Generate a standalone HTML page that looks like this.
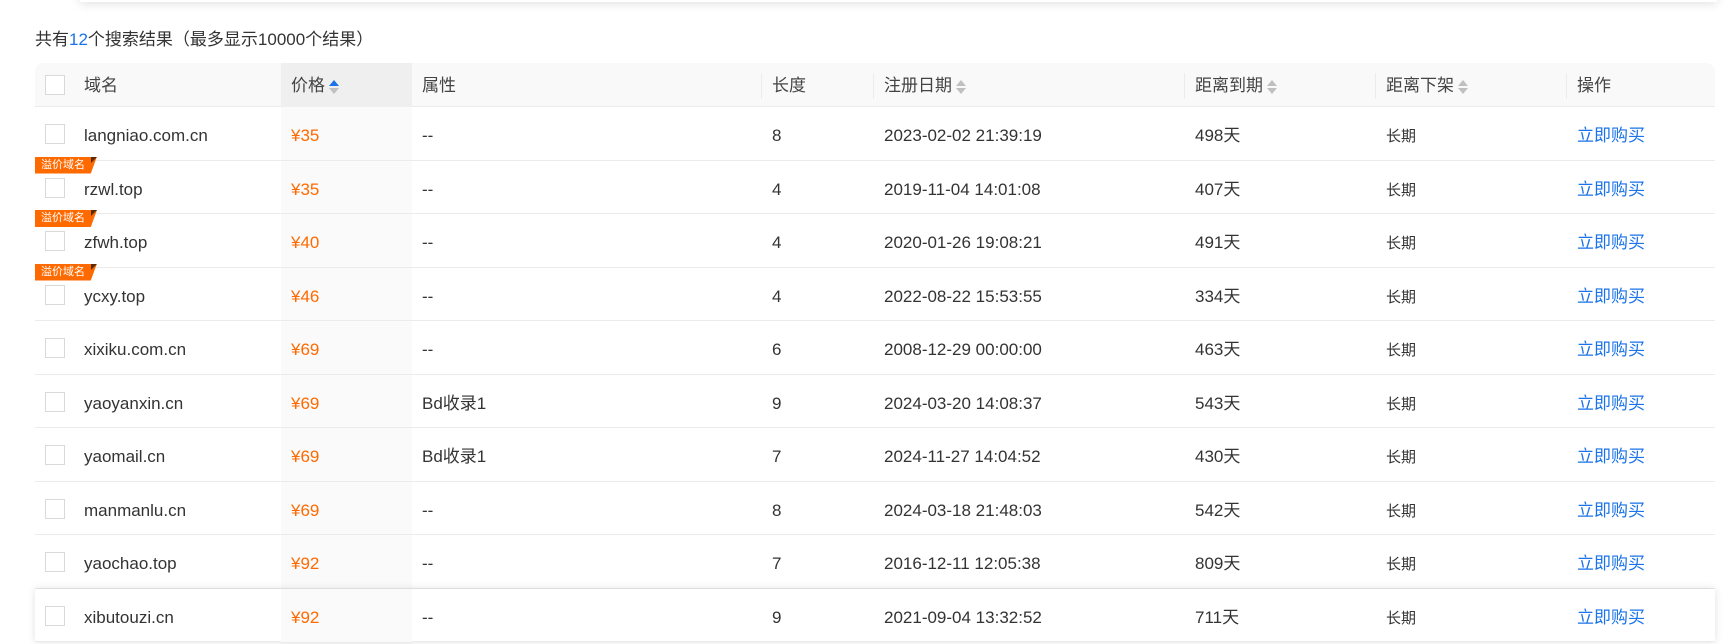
<!DOCTYPE html>
<html><head><meta charset="utf-8"><style>
*{margin:0;padding:0;box-sizing:border-box}
body{width:1735px;height:644px;overflow:hidden;background:#fff;font-family:"Liberation Sans","Noto Sans CJK SC",sans-serif;color:#333;position:relative}
.shadow{position:absolute;left:80px;right:18px;top:-20px;height:22px;background:#fff;box-shadow:0 2px 10px rgba(0,0,0,.12)}
.title{position:absolute;left:35px;top:25px;font-size:17px;color:#333}
.title b{font-weight:normal;color:#1a73e8}
.tbl{position:absolute;left:35px;top:63px;width:1680px;height:581px}
.hdr{position:absolute;left:0;top:0;width:1680px;height:44px;background:#f9f9f9;border-radius:8px 8px 0 0;border-bottom:1px solid #ebebeb}
.pcol{position:absolute;left:246px;top:0;width:131px;height:581px;background:#fafafa}
.pcolh{position:absolute;left:246px;top:0;width:131px;height:44px;background:#efefef}
.sep{position:absolute;top:10px;width:1px;height:26px;background:#ececec}
.t{position:absolute;white-space:nowrap;font-size:17px;line-height:20px}
.h{color:#444}
.cb{position:absolute;left:10px;width:20px;height:20px;border:1px solid #d9d9d9;background:#fff}
.row{position:absolute;left:0;width:1680px;height:53.5px;border-bottom:1px solid #ebebeb}
.last{background:#fff;box-shadow:0 0 8px rgba(0,0,0,.12)}
.pr{color:#ff6a00}
.lk{color:#1a73e8}
.sm{font-size:15px}
.arr{display:inline-block;vertical-align:middle;margin-left:4px;width:10px;height:16px;position:relative}
.arr:before{content:"";position:absolute;left:0;top:1px;border:5px solid transparent;border-bottom:6px solid #c0c0c0;border-top:0}
.arr:after{content:"";position:absolute;left:0;top:9px;border:5px solid transparent;border-top:6px solid #c0c0c0;border-bottom:0}
.arr.up:before{border-bottom-color:#1a73e8}
.tag{position:absolute;left:0;width:62px;height:17px;background:#ff6a00;color:#fff;font-size:11px;line-height:17px;padding-left:6px;clip-path:polygon(0 0,100% 0,90% 100%,0 100%)}
.tag:after{content:"";position:absolute;right:0;top:0;border:3px solid transparent;border-left-color:#5a2a00;border-top-color:#5a2a00}
</style></head><body>
<div class="shadow"></div>
<div class="title">共有<b>12</b>个搜索结果（最多显示10000个结果）</div>
<div class="tbl">
<div class="pcol"></div>
<div class="hdr"></div>
<div class="pcolh"></div>
<div class="sep" style="left:726px"></div>
<div class="sep" style="left:838px"></div>
<div class="sep" style="left:1149px"></div>
<div class="sep" style="left:1340px"></div>
<div class="sep" style="left:1531px"></div>
<div class="cb" style="top:12px"></div>
<div class="t h" style="left:49px;top:13px">域名</div>
<div class="t h" style="left:256px;top:13px">价格<span class="arr up"></span></div>
<div class="t h" style="left:387px;top:13px">属性</div>
<div class="t h" style="left:737px;top:13px">长度</div>
<div class="t h" style="left:849px;top:13px">注册日期<span class="arr"></span></div>
<div class="t h" style="left:1160px;top:13px">距离到期<span class="arr"></span></div>
<div class="t h" style="left:1351px;top:13px">距离下架<span class="arr"></span></div>
<div class="t h" style="left:1542px;top:13px">操作</div>
</div>
<div id="rows" style="position:absolute;left:35px;top:107px"></div>
<script>
var d=[["langniao.com.cn","35","--","8","2023-02-02 21:39:19","498",0],["rzwl.top","35","--","4","2019-11-04 14:01:08","407",1],["zfwh.top","40","--","4","2020-01-26 19:08:21","491",1],["ycxy.top","46","--","4","2022-08-22 15:53:55","334",1],["xixiku.com.cn","69","--","6","2008-12-29 00:00:00","463",0],["yaoyanxin.cn","69","Bd收录1","9","2024-03-20 14:08:37","543",0],["yaomail.cn","69","Bd收录1","7","2024-11-27 14:04:52","430",0],["manmanlu.cn","69","--","8","2024-03-18 21:48:03","542",0],["yaochao.top","92","--","7","2016-12-11 12:05:38","809",0],["xibutouzi.cn","92","--","9","2021-09-04 13:32:52","711",0]];
var h="";d.forEach(function(r,i){var y=i*53.5;var c=y+19;
if(i==9)h+='<div class="row last" style="top:'+y+'px"></div><div style="position:absolute;left:246px;top:'+y+'px;width:131px;height:53px;background:#fafafa"></div>';
else h+='<div class="row" style="top:'+y+'px"></div>';
h+='<div class="cb" style="top:'+(y+17)+'px"></div>';
if(r[6])h+='<div class="tag" style="top:'+(y-4)+'px">溢价域名</div>';
h+='<div class="t" style="left:49px;top:'+c+'px">'+r[0]+'</div><div class="t pr" style="left:256px;top:'+c+'px">¥'+r[1]+'</div><div class="t" style="left:387px;top:'+c+'px">'+r[2]+'</div><div class="t" style="left:737px;top:'+c+'px">'+r[3]+'</div><div class="t" style="left:849px;top:'+c+'px">'+r[4]+'</div><div class="t" style="left:1160px;top:'+c+'px">'+r[5]+'天</div><div class="t sm" style="left:1351px;top:'+(c+1)+'px">长期</div><div class="t lk" style="left:1542px;top:'+c+'px">立即购买</div>';});
document.getElementById("rows").innerHTML=h;
</script>
</body></html>
